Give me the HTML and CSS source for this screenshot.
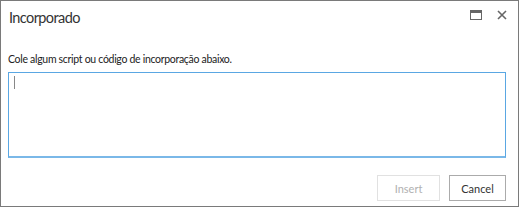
FILE: index.html
```html
<!DOCTYPE html>
<html lang="pt">
<head>
    <meta charset="UTF-8">
    <title>Incorporado</title>
    <link rel="stylesheet" href="styles.css">
</head>
<body>
    <div class="dialog">
        <div class="dialog-header">
            <h1 class="dialog-title">Incorporado</h1>
            <div class="window-btns">
                <button class="icon-btn" title="Maximizar">
                    <svg width="12" height="10" viewBox="0 0 12 10">
                        <rect x="0.5" y="0.5" width="11" height="9" fill="none" stroke="#666" stroke-width="1"/>
                        <line x1="0" y1="2" x2="12" y2="2" stroke="#666" stroke-width="2"/>
                    </svg>
                </button>
                <button class="icon-btn" title="Fechar">
                    <svg width="10" height="10" viewBox="0 0 10 10">
                        <path d="M1 1L9 9M9 1L1 9" stroke="#666" stroke-width="1.6" fill="none"/>
                    </svg>
                </button>
            </div>
        </div>
        <div class="dialog-body">
            <label class="field-label" for="embed">Cole algum script ou código de incorporação abaixo.</label>
            <div class="embed-box">
                <span class="caret"></span>
            </div>
        </div>
        <div class="dialog-footer">
            <button class="btn btn-insert" disabled>Insert</button>
            <button class="btn btn-cancel">Cancel</button>
        </div>
    </div>
</body>
</html>
```

FILE: styles.css
```css
body {
    margin: 0;
    background: #fff;
    font-family: Lato, "Noto Sans", Arial, sans-serif;
    color: #333;
}

.dialog {
    box-sizing: border-box;
    width: 519px;
    height: 207px;
    border: 1px solid #7a7a7a;
    background: #fff;
    display: flex;
    flex-direction: column;
}

.dialog-header {
    display: flex;
    justify-content: space-between;
    align-items: flex-start;
    padding: 6px 7px 0 8px;
    height: 30px;
}

.dialog-title {
    margin: 0;
    font-size: 14.5px;
    letter-spacing: -0.6px;
    font-weight: normal;
    line-height: 22px;
    color: #333;
}

.window-btns {
    display: flex;
    gap: 8px;
    padding-top: 2px;
}

.icon-btn {
    background: none;
    border: none;
    padding: 0;
    width: 18px;
    height: 12px;
    display: flex;
    align-items: center;
    justify-content: center;
}

.dialog-body {
    padding: 14px 12px 0 7px;
}

.field-label {
    display: block;
    font-size: 10.5px;
    letter-spacing: -0.3px;
    line-height: 16px;
    color: #222;
    margin-bottom: 5px;
}

.embed-box {
    box-sizing: border-box;
    height: 86px;
    border: 1px solid #5aa7e3;
    border-bottom: 2px solid #7ab8e8;
    padding: 3px 4px;
}

.caret {
    display: block;
    width: 1px;
    height: 13px;
    background: #888;
    margin-left: 1px;
}

.dialog-footer {
    margin-top: auto;
    display: flex;
    justify-content: flex-end;
    gap: 9px;
    padding: 0 12px 5px 0;
}

.btn {
    font-family: inherit;
    font-size: 11px;
    color: #333;
    background: #fff;
    border: 1px solid #ababab;
    height: 26px;
    padding: 0;
}

.btn-insert {
    width: 63px;
}

.btn-cancel {
    width: 57px;
}

.btn:disabled {
    color: #b1b1b1;
    border-color: #e1e1e1;
}
```
